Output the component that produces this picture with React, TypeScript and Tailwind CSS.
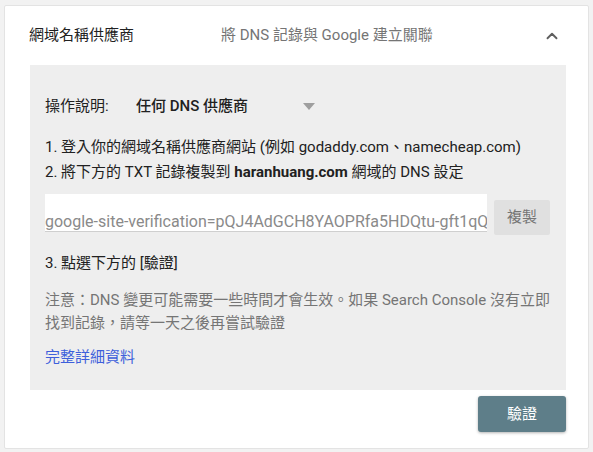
import { ChevronUp } from "lucide-react";

const TXT_RECORD = "google-site-verification=pQJ4AdGCH8YAOPRfa5HDQtu-gft1qQ";

export default function App() {
  return (
    <div className="h-[452px] w-[593px] overflow-hidden bg-[#f2f2f2] px-[4px] pt-[5px] font-[Roboto,'Noto_Sans_CJK_TC',sans-serif]">
      <section className="flex h-[444px] flex-col rounded-[2px] border border-[#e3e3e3] bg-white">
        <header className="flex h-[59px] items-center pl-[24px] pr-[27px]">
          <h2 className="w-[192px] text-[15px] text-[#212121]">網域名稱供應商</h2>
          <p className="flex-1 text-[15px] text-[#757575]">將 DNS 記錄與 Google 建立關聯</p>
          <ChevronUp className="h-[18px] w-[18px] text-[#5f5f5f]" strokeWidth={2.5} aria-hidden />
        </header>

        <div className="ml-[25px] mr-[22px] bg-[#eeeeee] pb-[21px] pl-[15px] pr-[16px] pt-[29px] text-[15px] text-[#212121]">
          <div className="flex h-[24px] items-center">
            <span className="w-[91px]">操作說明:</span>
            <span className="w-[167px] font-medium">任何 DNS 供應商</span>
            <span className="h-0 w-0 border-x-[6px] border-t-[7px] border-x-transparent border-t-[#9e9e9e]" />
          </div>

          <ol className="mt-[17px] leading-[25px]">
            <li>1. 登入你的網域名稱供應商網站 (例如 godaddy.com、namecheap.com)</li>
            <li>
              2. 將下方的 TXT 記錄複製到 <b className="font-bold">haranhuang.com</b> 網域的 DNS 設定
            </li>
          </ol>

          <div className="mt-[9px] flex items-start gap-[7px]">
            <div className="flex h-[38px] flex-1 items-end overflow-hidden whitespace-nowrap border-b border-[#cfcfcf] bg-white pb-[1px] text-[16px] leading-[16px] text-[#8a8a8a]">
              {TXT_RECORD}
            </div>
            <button className="mt-[6px] h-[35px] w-[56px] rounded-[2px] bg-[#e0e0e0] text-[15px] text-[#757575]">
              複製
            </button>
          </div>

          <p className="mt-[16px] leading-[25px]">3. 點選下方的 [驗證]</p>

          <p className="mt-[13px] leading-[23px] text-[#757575]">
            注意：DNS 變更可能需要一些時間才會生效。如果 Search Console 沒有立即找到記錄，請等一天之後再嘗試驗證
          </p>

          <a href="#" className="mt-[11px] block leading-[23px] text-[#3d5fdb]">
            完整詳細資料
          </a>
        </div>

        <div className="mr-[22px] mt-[6px] flex justify-end">
          <button className="h-[36px] w-[88px] rounded-[3px] bg-[#5e7e89] text-[15px] text-white shadow-[0_1px_3px_rgba(0,0,0,0.3)]">
            驗證
          </button>
        </div>
      </section>
    </div>
  );
}
